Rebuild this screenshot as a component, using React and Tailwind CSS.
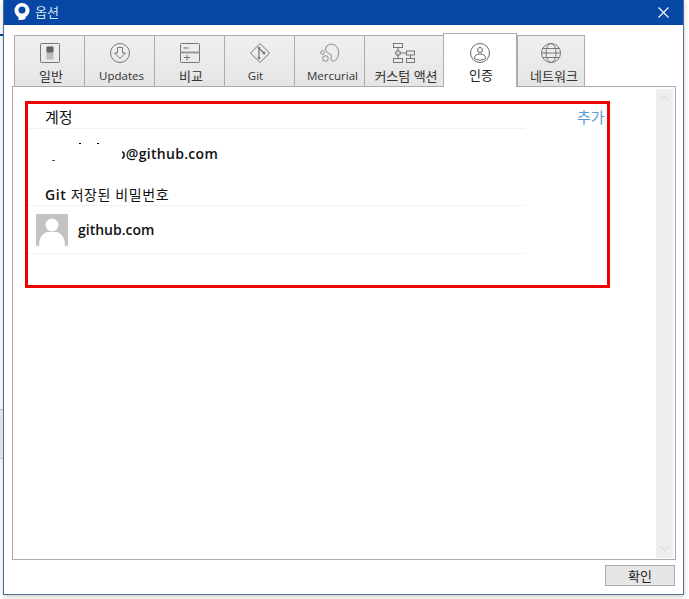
import React from 'react';

const font = { fontFamily: '"Open Sans", "Noto Sans CJK KR", sans-serif' };

const Logo = () => (
  <svg className="-mt-[2px]" width="16" height="17" viewBox="0 0 16 17">
    <circle cx="8" cy="7.500" r="7.500" fill="#fff" />
    <path d="M4.500 12h7v3.800c-1.500 1-4 1.400-7 1.200z" fill="#fff" />
    <circle cx="8" cy="7" r="3.500" fill="#0747a6" />
  </svg>
);

const GeneralIcon = () => (
  <svg width="20" height="20" viewBox="0 0 20 20" fill="none">
    <rect x="0.500" y="0.500" width="19" height="19" rx="1" stroke="#777" />
    <rect x="6.500" y="3.500" width="7" height="13" rx="1" fill="#bbb" />
    <rect x="6.500" y="3.500" width="7" height="6" rx="1" fill="#666" />
  </svg>
);

const UpdatesIcon = () => (
  <svg width="20" height="20" viewBox="0 0 20 20" fill="none" stroke="#777">
    <circle cx="10" cy="10" r="9.500" />
    <path d="M7.500 4.500h5v5.500h3L10 15.500 4.500 10h3z" />
  </svg>
);

const CompareIcon = () => (
  <svg width="20" height="20" viewBox="0 0 20 20" fill="none" stroke="#777">
    <rect x="0.500" y="0.500" width="19" height="19" rx="1" />
    <path d="M0.500 9.500h19" stroke="#999" strokeWidth="2" />
    <path d="M3.500 5h5" stroke="#aaa" strokeWidth="2" />
    <path d="M4 14.500h6M7 12v5.500" />
  </svg>
);

const GitIcon = () => (
  <svg width="20" height="20" viewBox="0 0 20 20" fill="none" stroke="#777">
    <path d="M10 0.500l9.500 9.500-9.500 9.500L0.500 10z" />
    <path d="M9 5v10M9 5.500l5 4.500" strokeWidth="1.200" />
    <circle cx="9" cy="15" r="1" fill="#777" />
    <circle cx="9" cy="5" r="1" fill="#777" />
    <circle cx="14" cy="10" r="1" fill="#777" />
  </svg>
);

const MercurialIcon = () => (
  <svg width="20" height="20" viewBox="0 0 20 20" fill="none" stroke="#888">
    <path d="M6 4c2-3 7-4 10-1 3.500 3.500 3.500 9 .5 13-1.500 2-4 3-5 1.500-1-1.500.5-3.500-.5-5.500-1-1.800-4-2-5-4-.5-1.200-.5-2.700.5-4z" />
    <circle cx="2.500" cy="9.500" r="1.800" />
    <circle cx="5.500" cy="15.500" r="2.800" />
  </svg>
);

const CustomActionIcon = () => (
  <svg width="22" height="20" viewBox="0 0 22 20" fill="none" stroke="#777">
    <rect x="0.500" y="0.500" width="9" height="4" />
    <rect x="0.500" y="15.500" width="9" height="4" />
    <rect x="13.500" y="8" width="8" height="4" />
    <rect x="13.500" y="15.500" width="8" height="4" />
    <circle cx="5" cy="10" r="2.500" fill="#ccc" />
    <path d="M5 4.500v3M5 12.500v3M7.500 10h6M17.500 12v3.500" />
  </svg>
);

const AuthIcon = () => (
  <svg width="20" height="20" viewBox="0 0 20 20" fill="none" stroke="#666">
    <circle cx="10" cy="10" r="9.500" />
    <circle cx="10" cy="7" r="2.500" />
    <path d="M4.500 15.500c0-3 2-4.500 5.500-4.500s5.500 1.500 5.500 4.500c-3 2-8 2-11 0z" />
  </svg>
);

const GlobeIcon = () => (
  <svg width="20" height="20" viewBox="0 0 20 20" fill="none" stroke="#777">
    <circle cx="10" cy="10" r="9.500" />
    <ellipse cx="10" cy="10" rx="5" ry="9.500" />
    <path d="M1.500 5.500h17M1.500 14.500h17M0.500 10h19" />
  </svg>
);

const tabs = [
  { label: '일반', icon: <GeneralIcon />, width: 'w-[71px]', text: 'text-[13px] ml-[3px]' },
  { label: 'Updates', icon: <UpdatesIcon />, width: 'w-[71px]', text: 'text-[11.500px] ml-[4px]' },
  { label: '비교', icon: <CompareIcon />, width: 'w-[71px]', text: 'text-[13px] ml-[3px]' },
  { label: 'Git', icon: <GitIcon />, width: 'w-[71px]', text: 'text-[11.500px] mr-[8px]' },
  { label: 'Mercurial', icon: <MercurialIcon />, width: 'w-[71px]', text: 'text-[11.500px] ml-[6px]' },
  { label: '커스텀 액션', icon: <CustomActionIcon />, width: 'w-[80px]', text: 'text-[13px] ml-[4px]' },
  { label: '인증', icon: <AuthIcon />, width: 'w-[74px]', text: 'text-[13px] ml-[2px]', active: true },
  { label: '네트워크', icon: <GlobeIcon />, width: 'w-[68px]', text: 'text-[13px] ml-[6px]' },
];

const Tab = ({ tab }) => {
  if (tab.active) {
    return (
      <div className={`${tab.width} h-[54px] relative z-10 flex flex-col items-center pt-[9px] gap-[4px] bg-white border border-b-0 border-[#acacac]`}>
        {tab.icon}
        <span className={`${tab.text} leading-[16px] text-[#222]`}>{tab.label}</span>
      </div>
    );
  }
  return (
    <div className={`${tab.width} h-[52px] -mr-px flex flex-col items-center pt-[7px] gap-[5px] bg-gradient-to-b from-[#f0f0f0] to-[#e5e5e5] border border-[#acacac]`}>
      {tab.icon}
      <span className={`${tab.text} leading-[16px] text-[#333] whitespace-nowrap`}>{tab.label}</span>
    </div>
  );
};

const Avatar = () => (
  <svg width="32" height="32" viewBox="0 0 32 32">
    <rect width="32" height="32" fill="#c3c3c3" />
    <circle cx="16" cy="11" r="6.500" fill="#fff" />
    <path d="M3 32c0-8 3-12 8-14h10c5 2 8 6 8 14z" fill="#fff" />
  </svg>
);

const App = () => {
  return (
    <div className="relative w-[689px] h-[599px] bg-white overflow-hidden" style={font}>
      <div className="absolute left-0 top-[34px] w-[3px] h-[2px] bg-[#0747a6]" />
      <div className="absolute left-0 top-[409px] w-[3px] h-[50px] bg-[#e2e2e2] border-y border-[#bdbdbd]" />

      <div className="ml-[3px] w-[681px] h-[595px] flex flex-col bg-white border-x border-b border-[#51708f] shadow-[0_2px_5px_rgba(0,0,0,0.2)]">
        {/* title bar */}
        <div className="h-[25px] shrink-0 flex items-center bg-[#0747a6] pl-[10px] pr-[14px]">
          <Logo />
          <span className="ml-[5px] text-[13px] text-[#d5e0f0]">옵션</span>
          <svg className="ml-auto" width="11" height="11" viewBox="0 0 11 11" stroke="#fff" strokeWidth="1.100">
            <path d="M0.500 0.500l10 10M10.500 0.500l-10 10" />
          </svg>
        </div>

        {/* tabs */}
        <div className="flex items-end h-[62px] shrink-0 pl-[10px]">
          {tabs.map((tab) => (
            <Tab key={tab.label} tab={tab} />
          ))}
        </div>

        {/* panel */}
        <div className="-mt-px ml-[8px] w-[664px] h-[474px] shrink-0 flex border border-[#acacac] pl-[12px] pr-[2px] pt-[2px] pb-[1px]">
          <div className="flex-1 pt-[12px]">
            <div className="w-[585px] h-[187px] border-[3px] border-[#f00000] flex flex-col text-[#111]">
              <div className="relative w-[497px] h-[25px] border-b border-[#f2f2f2] pl-[17px] pt-[1px]">
                <span className="text-[15px] leading-[20px]">계정</span>
                <span className="absolute left-[549px] top-[3px] text-[15px] leading-[20px] text-[#5b9bd5] whitespace-nowrap">추가</span>
              </div>
              <div className="relative h-[49px] pl-[89px] pt-[15px] text-[14px] leading-[20px] font-semibold tracking-[0.3px]">
                o@github.com
                <div className="absolute left-[60px] top-[10px] w-[34px] h-[30px] bg-white" />
                <div className="absolute left-[51px] top-[14px] w-[2px] h-px bg-black" />
                <div className="absolute left-[69px] top-[14px] w-[2px] h-px bg-black" />
                <div className="absolute left-[24px] top-[31px] w-[3px] h-px bg-[#555]" />
              </div>
              <div className="w-[497px] h-[28px] border-b border-[#f2f2f2] pl-[17px] pt-[7px] text-[14px] leading-[20px] tracking-[0.6px]">
                <span className="font-semibold">Git</span> 저장된 비밀번호
              </div>
              <div className="w-[497px] h-[48px] border-b border-[#f2f2f2] flex items-center pl-[8px] gap-[10px] text-[14px] font-semibold">
                <Avatar />
                <span>github.com</span>
              </div>
            </div>
          </div>
          {/* scrollbar */}
          <div className="w-[17px] shrink-0 bg-[#eeeeee] flex flex-col items-center justify-between py-[7px]">
            <svg width="9" height="5" viewBox="0 0 9 5" fill="none" stroke="#d0d0d0"><path d="M0.500 4.500l4-4 4 4" /></svg>
            <svg width="9" height="5" viewBox="0 0 9 5" fill="none" stroke="#d0d0d0"><path d="M0.500 0.500l4 4 4-4" /></svg>
          </div>
        </div>

        {/* footer */}
        <div className="flex justify-end pr-[8px] pt-[5px]">
          <button className="w-[70px] h-[21px] bg-[#e6e6e6] border border-[#acacac] text-[13px] leading-[18px] text-[#222]">확인</button>
        </div>
      </div>
    </div>
  );
};

export default App;
